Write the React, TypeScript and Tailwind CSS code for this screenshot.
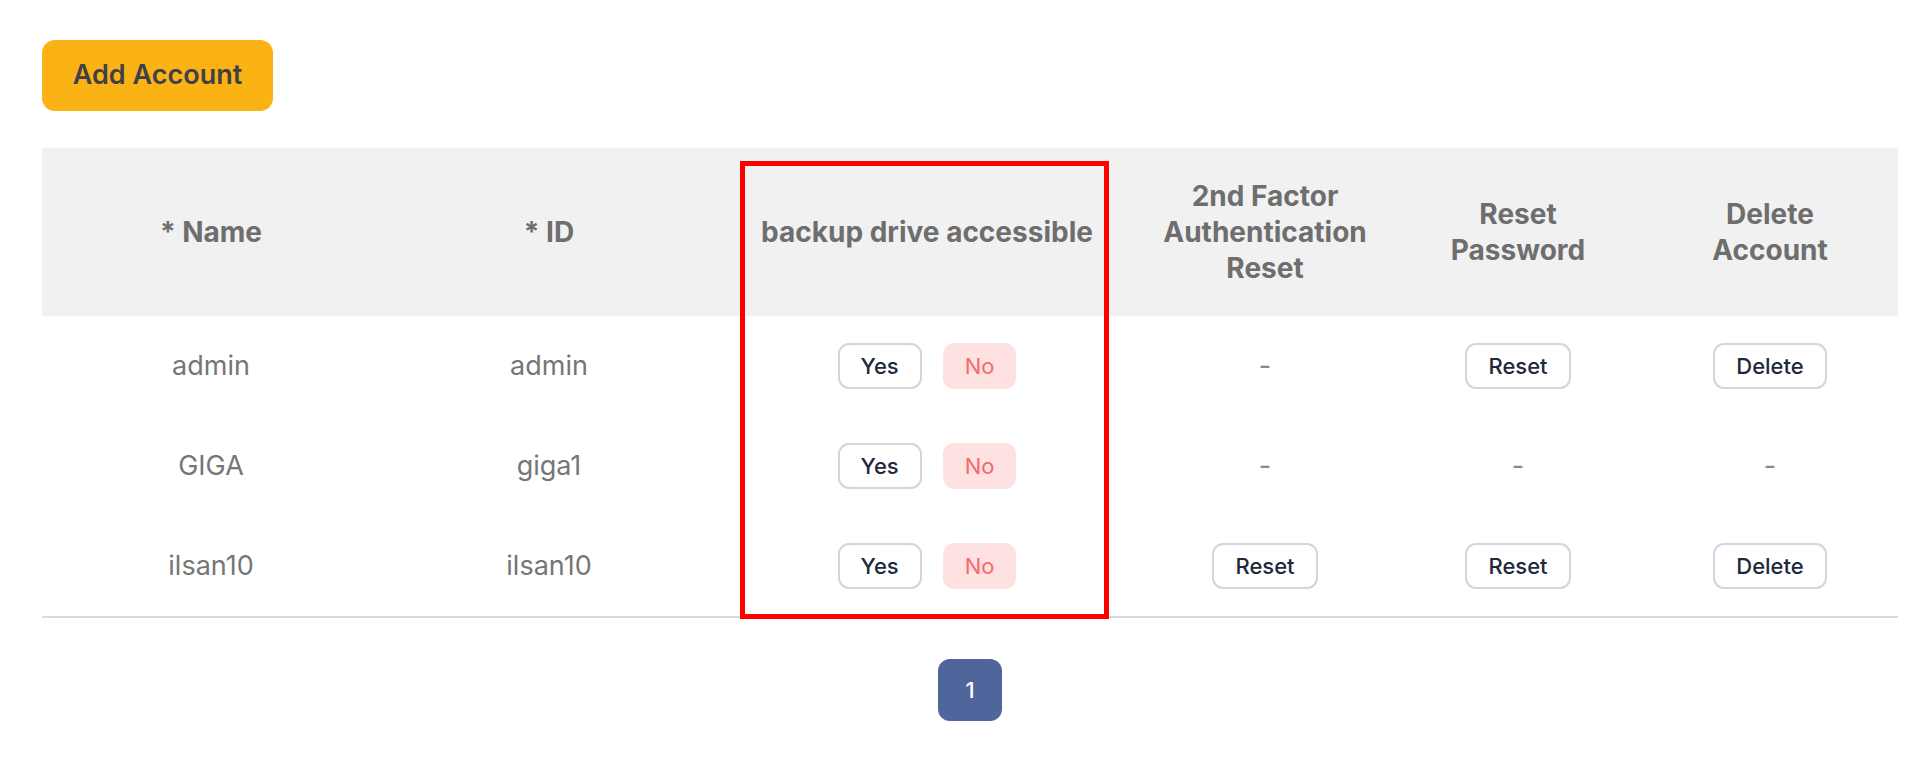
import React from 'react';

const accounts = [
  { name: 'admin', id: 'admin', otpReset: false, pwReset: true, canDelete: true },
  { name: 'GIGA', id: 'giga1', otpReset: false, pwReset: false, canDelete: false },
  { name: 'ilsan10', id: 'ilsan10', otpReset: true, pwReset: true, canDelete: true },
];

function OutlineButton({ label }: { label: string }) {
  return (
    <button className="h-[46px] px-[21px] rounded-[11px] border-2 border-[#cfd6e0] bg-white text-[22px] font-medium text-[#1e293b] leading-none">
      {label}
    </button>
  );
}

function Dash() {
  return <span className="text-[#8a8a8a]">-</span>;
}

export default function App() {
  return (
    <div className="min-h-screen bg-white font-[Inter,sans-serif] pt-[40px] pl-[42px] pr-[22px]">
      {/* Toolbar */}
      <button className="w-[231px] h-[71px] rounded-[13px] bg-[#fbb215] text-[27px] font-semibold text-[#3f4048]">
        Add Account
      </button>

      {/* Accounts table */}
      <div className="relative mt-[37px]">
        <table className="w-full table-fixed border-collapse">
          <colgroup>
            <col className="w-[338px]" />
            <col className="w-[338px]" />
            <col className="w-[418px]" />
            <col className="w-[258px]" />
            <col className="w-[248px]" />
            <col />
          </colgroup>
          <thead>
            <tr className="bg-[#f1f1f1] h-[168px] text-[28px] font-bold leading-[36px] text-[#6e6e6e]">
              <th className="px-2">* Name</th>
              <th className="px-2">* ID</th>
              <th className="px-2">backup drive accessible</th>
              <th className="px-2">
                2nd Factor
                <br />
                Authentication
                <br />
                Reset
              </th>
              <th className="px-2">
                Reset
                <br />
                Password
              </th>
              <th className="px-2">
                Delete
                <br />
                Account
              </th>
            </tr>
          </thead>
          <tbody className="text-[27px] text-[#767676] text-center">
            {accounts.map((a, i) => (
              <tr key={a.id} className={i === accounts.length - 1 ? 'h-[101px] border-b-2 border-[#dadada]' : 'h-[100px]'}>
                <td>{a.name}</td>
                <td>{a.id}</td>
                <td>
                  <div className="flex items-center justify-center gap-[21px]">
                    <OutlineButton label="Yes" />
                    <button className="h-[46px] px-[22px] rounded-[11px] bg-[#fee2e2] text-[22px] text-[#f46a6a] leading-none">
                      No
                    </button>
                  </div>
                </td>
                <td>{a.otpReset ? <OutlineButton label="Reset" /> : <Dash />}</td>
                <td>{a.pwReset ? <OutlineButton label="Reset" /> : <Dash />}</td>
                <td>{a.canDelete ? <OutlineButton label="Delete" /> : <Dash />}</td>
              </tr>
            ))}
          </tbody>
        </table>

        {/* Highlight annotation */}
        <div className="absolute left-[698px] top-[13px] w-[369px] h-[458px] border-[5px] border-[#ff0000] pointer-events-none" />
      </div>

      {/* Pagination */}
      <div className="flex justify-center mt-[41px]">
        <button className="w-[64px] h-[62px] rounded-[12px] bg-[#50659b] text-[22px] font-medium text-white">
          1
        </button>
      </div>
    </div>
  );
}
